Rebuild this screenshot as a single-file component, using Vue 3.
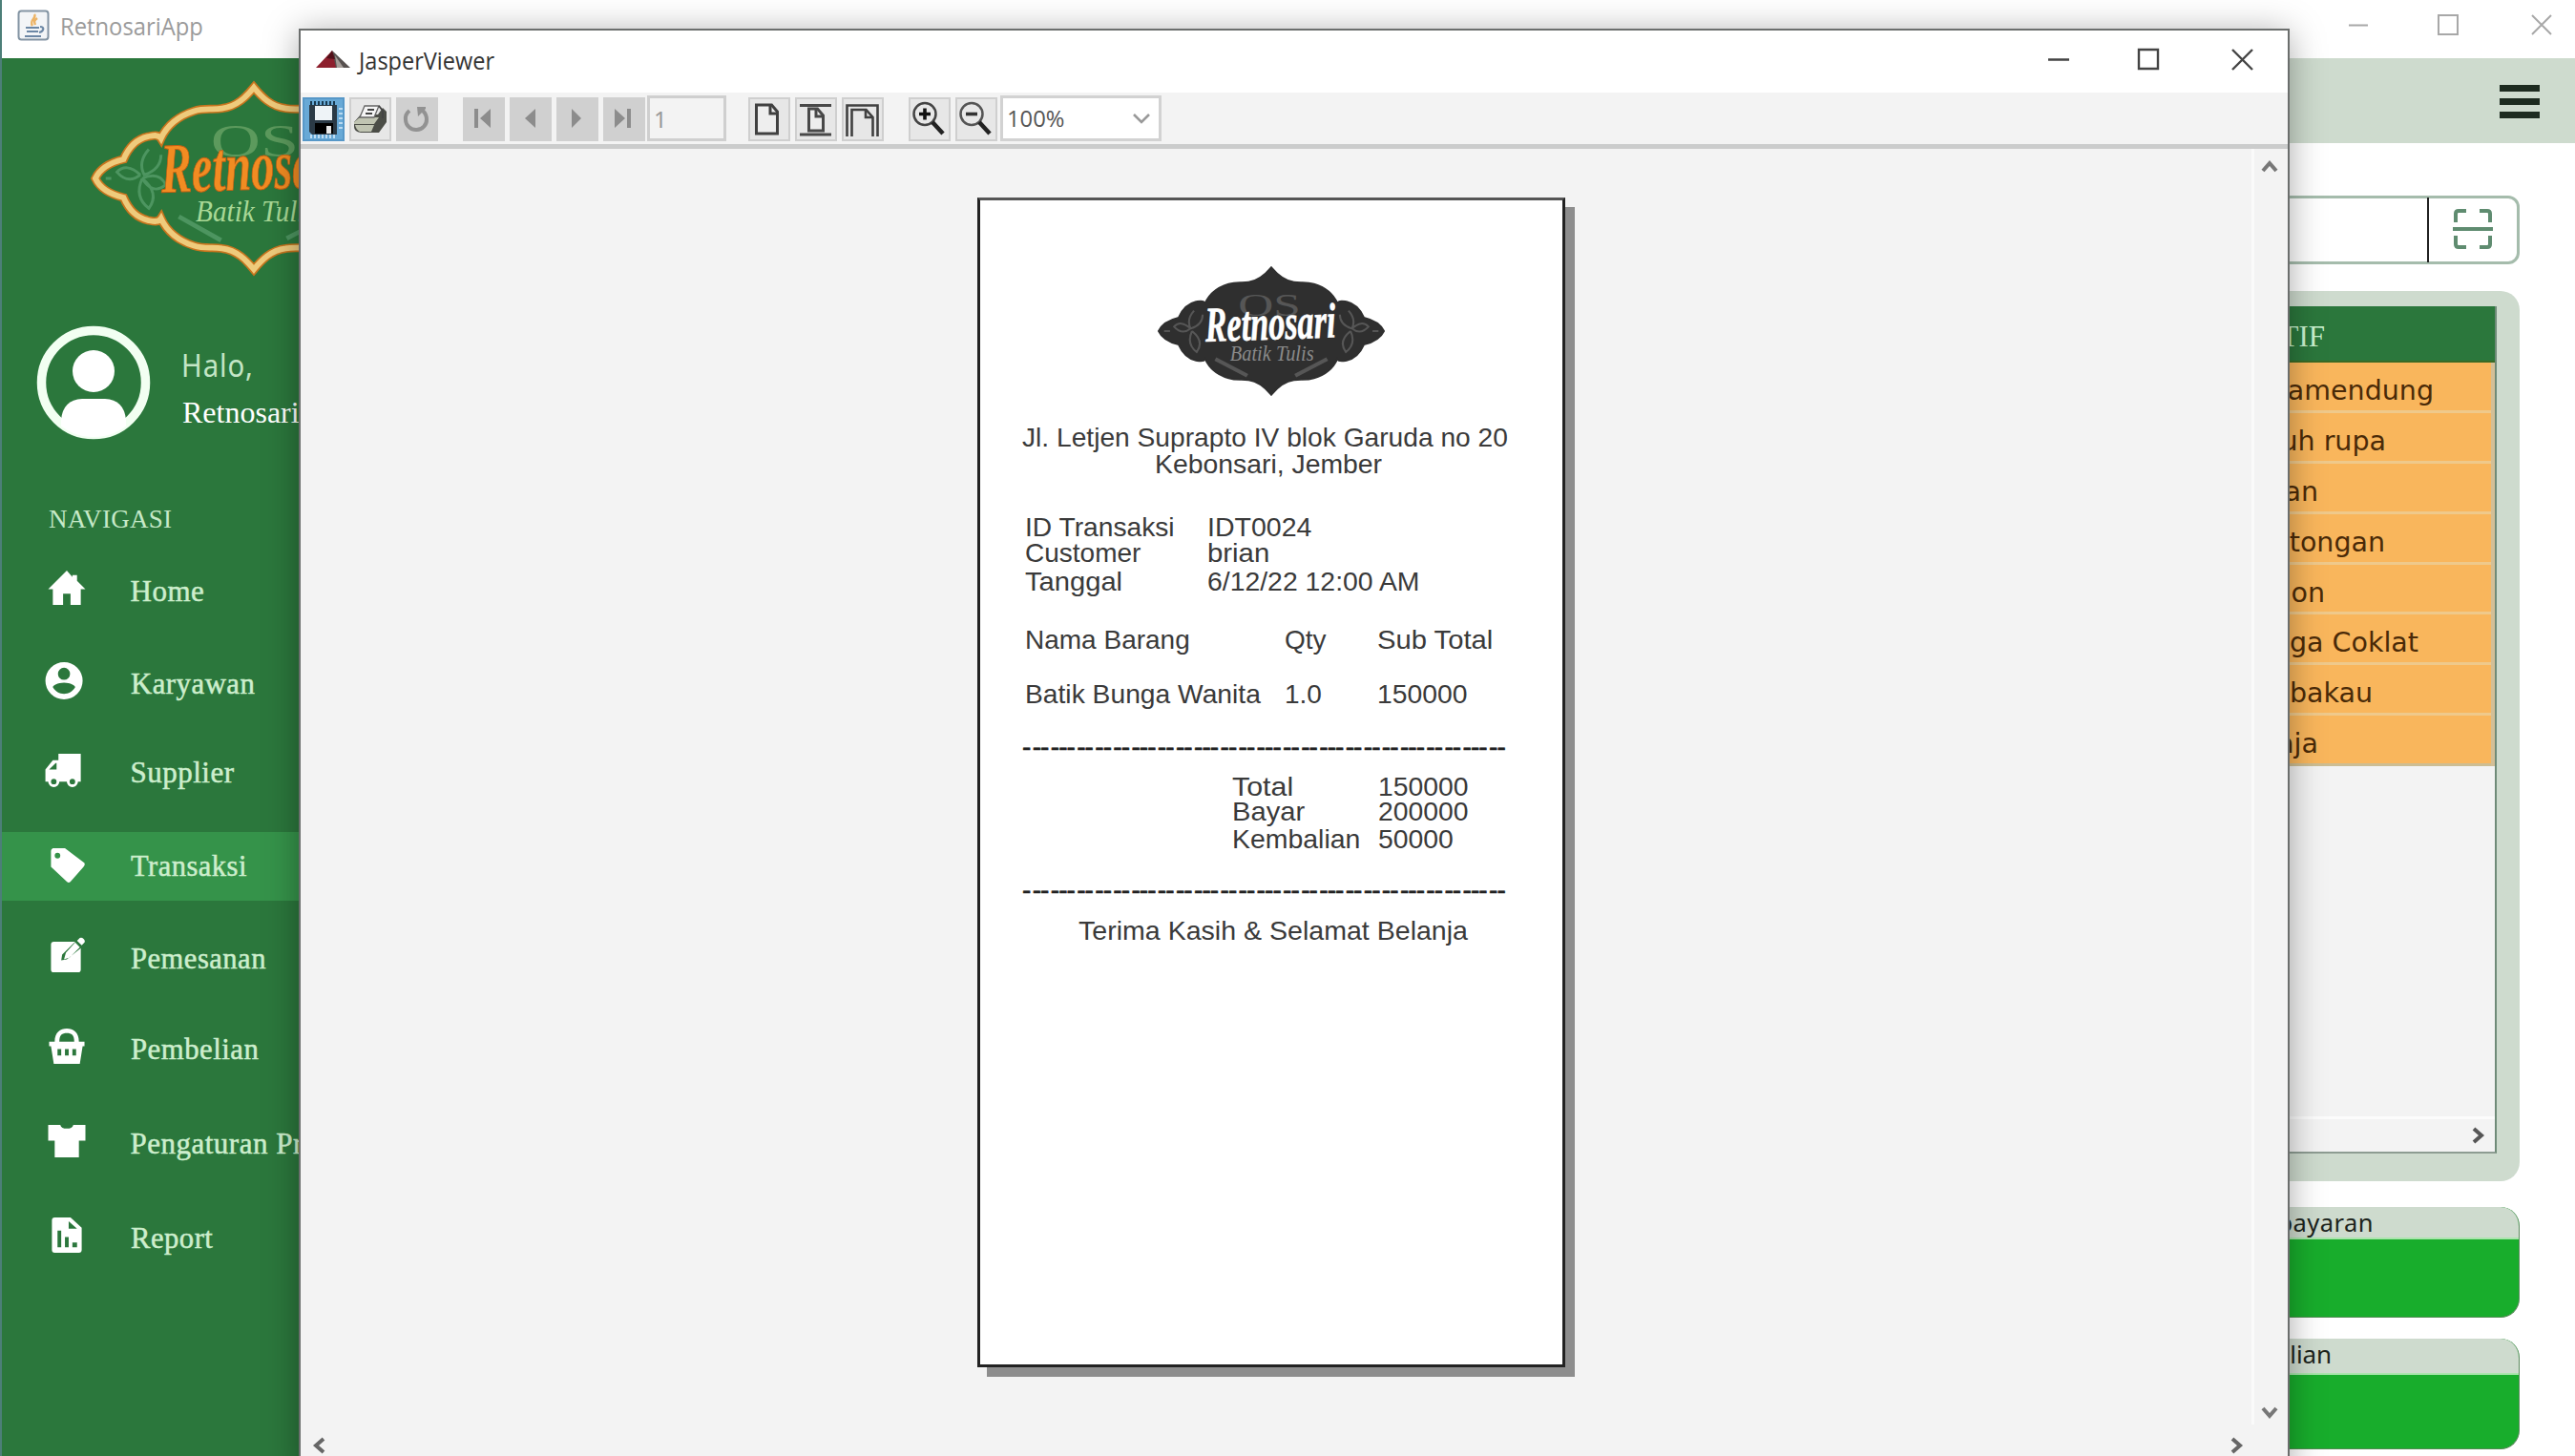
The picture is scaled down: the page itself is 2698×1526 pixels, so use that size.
<script setup>
const emblem =
  'M0-100C-8-90-18-79-34-77C-44-75-52-78-64-74C-80-69-93-58-99-44C-102-49-108-47-113-46C-126-43-134-33-139-21C-155-17-165-9-169 0C-165 9-155 17-139 21C-134 33-126 43-113 46C-108 47-102 49-99 44C-93 58-80 69-64 74C-52 78-44 75-34 77C-18 79-8 90 0 100C8 90 18 79 34 77C44 75 52 78 64 74C80 69 93 58 99 44C102 49 108 47 113 46C126 43 134 33 139 21C155 17 165 9 169 0C165-9 155-17 139-21C134-33 126-43 113-46C108-47 102-49 99-44C93-58 80-69 64-74C52-78 44-75 34-77C18-79 8-90 0-100Z'

const nav = [
  { label: 'Home', gap: 0, w: 78, icon: 'M20 1L0 21h5v17h11V26h8v12h11V21h5L31 12V6h-5v2z' },
  { label: 'Karyawan', gap: 25, w: 130, dx: -3, icon: 'M20 0a20 20 0 1 0 0 40a20 20 0 0 0 0-40zM20 6a6.5 6.5 0 1 1 0 13a6.5 6.5 0 0 1 0-13zM20 22c7 0 12 3 12 5c-3 5-7 7-12 7s-9-2-12-7c0-2 5-5 12-5z' },
  { label: 'Supplier', gap: 21, w: 109, dx: -3, dy: 2, icon: 'M14 1h24v30h-3a6 6 0 1 1-12 0h-8a6 6 0 1 1-12 0H0V18L8 8h6zM11 11L4 18h8v-7zM9 28a3 3 0 1 0 0 6a3 3 0 0 0 0-6zM29 28a3 3 0 1 0 0 6a3 3 0 0 0 0-6z' },
  { label: 'Transaksi', gap: 26, w: 122, dy: 2, active: true, icon: 'M5 2h13l21 16q1 2-1 4L24 38q-2 2-4 0L3 22V5q0-2 2-3zM10 7a3 3 0 1 0 0 6a3 3 0 0 0 0-6z' },
  { label: 'Pemesanan', gap: 25, w: 142, icon: 'M6 5h23L15 19l-1 6l6-1L35 12v23q0 3-3 3H6q-3 0-3-3V8q0-3 3-3zM34 1q2-1 4 1t1 4l-3 3l-5-5zM29 6l5 5L23 22l-6 2l2-7z' },
  { label: 'Pembelian', gap: 23, w: 134, icon: 'M7 15C7 5 13 1 20 1s13 4 13 14h6v5h-2l-3 19H6L3 20H1v-5zM12 15h16C28 8 25 6 20 6s-8 2-8 9zM10 23v7h4v-7zM18 23v7h4v-7zM26 23v7h4v-7z' },
  { label: 'Pengaturan Produk', gap: 27, icon: 'M0 3h13q1 4 7 4t7-4h13v17h-7v18H7V20H0z' },
  { label: 'Report', gap: 27, w: 86, icon: 'M7 1h17l12 11v24q0 3-3 3H7q-3 0-3-3V4q0-3 3-3zM22 5v8h9zM10 15v18h4V15zM18 22v11h4V22zM26 28v5h5v-5z' },
]

const motifs = [
  ['amendung', 65], ['uh rupa', 115], ['an', 186], ['tongan', 116],
  ['on', 179], ['ga Coklat', 81], ['bakau', 129], ['aja', 186],
]

const dashes = [1, 2, 3, 2, 2, 2, 3, 2, 2, 3, 2, 2, 3, 2, 2, 3, 2, 2, 2, 3, 2, 2, 3, 2]

// Squeezes or stretches a label horizontally to the given width.
const vFit = {
  mounted(el, { value }) {
    if (value) el.style.transform = `scaleX(${value / el.offsetWidth})`
  },
}
</script>

<template>
  <div class="desktop">
    <header class="titlebar">
      <svg class="java" viewBox="0 0 34 33">
        <rect x="1.5" y="1.5" width="31" height="30" rx="3" fill="#f3f5f7" stroke="#8394a3" stroke-width="2" />
        <path d="M18 5c3 4-6 6-2 12M21 9c-4 3-3 4-2 7" fill="none" stroke="#edb466" stroke-width="2.4" />
        <path d="M9 19h14M10 23h12M8 28h17M24 18c5 0 4 5-1 6" fill="none" stroke="#6c87a5" stroke-width="2.2" />
      </svg>
      <span v-fit="150" class="fit apptitle">RetnosariApp</span>
      <svg class="controls" viewBox="0 0 216 24" fill="none" stroke="#a8a8a8" stroke-width="2">
        <path d="M1 12.500h20M95 2h20v20H95zM193 2l20 20M213 2l-20 20" />
      </svg>
    </header>

    <div class="body">
      <aside class="sidebar">
        <svg class="brand" viewBox="-173 -107 346 214" preserveAspectRatio="none">
          <path :d="emblem" fill="none" stroke="#c8751e" stroke-width="9.500" />
          <path :d="emblem" fill="none" stroke="#efcb7c" stroke-width="6" />
          <text x="-46" y="-24" textLength="94" lengthAdjust="spacingAndGlyphs" class="os" fill="#5c9a5d">OS</text>
          <g fill="none" stroke="#4d9560" stroke-width="3">
            <path d="M-112-32q-12 14-5 28q18-6 18-22M-121-4q-15-14-25-3q12 14 25 3M-119 0q-9 20 7 33q12-17-7-33M-119 0q18-8 25 7q-14 12-25-7M-152 0h-6" />
            <path d="M-80 42l45 26M80 42L35 66" stroke-width="5" />
          </g>
          <text x="-99" y="12" textLength="198" lengthAdjust="spacingAndGlyphs" class="script" fill="#f28c22" stroke="#c65f12" transform="rotate(-2)">Retnosari</text>
          <text x="-62" y="47" textLength="128" lengthAdjust="spacingAndGlyphs" class="sub" fill="#a8d896">Batik Tulis</text>
        </svg>

        <div class="profile">
          <svg class="avatar" viewBox="0 0 120 122">
            <clipPath id="face"><circle cx="60" cy="61" r="57" /></clipPath>
            <circle cx="60" cy="61" r="54.500" fill="none" stroke="#f2fff2" stroke-width="9.500" />
            <ellipse cx="60" cy="49" rx="22" ry="22" fill="#fff" />
            <path d="M26 122V100q2-21 22-22h24q20 1 22 22v22z" fill="#fff" clip-path="url(#face)" />
          </svg>
          <div class="greet">
            <span v-fit="76" class="fit halo">Halo,</span>
            <span class="user">Retnosari</span>
          </div>
        </div>

        <div class="navhead">NAVIGASI</div>
        <nav>
          <a v-for="n in nav" :key="n.label" class="item" :class="{ active: n.active }" :style="{ marginTop: n.gap + 'px' }">
            <svg class="ico" viewBox="0 0 40 40"><path :d="n.icon" fill="#fff" fill-rule="evenodd" :transform="`translate(${n.dx || 0} ${n.dy || 0})`" /></svg>
            <span v-fit="n.w" class="fit">{{ n.label }}</span>
          </a>
        </nav>
      </aside>

      <main class="content">
        <div class="topbar"><div class="burger"><i /><i /><i /></div></div>
        <div class="search">
          <div class="scan">
            <svg viewBox="0 0 42 44" fill="none" stroke="#5f8c70" stroke-width="4">
              <path d="M14 3H6q-3 0-3 3v9M28 3h8q3 0 3 3v9M14 41H6q-3 0-3-3v-9M28 41h8q3 0 3-3v-9M0 22h42" />
            </svg>
          </div>
        </div>
        <section class="panel">
          <div class="table">
            <div class="thead">MOTIF</div>
            <div class="rows">
              <div v-for="m in motifs" :key="m[0]" class="row" :style="{ paddingRight: m[1] - 5 + 'px' }">{{ m[0] }}</div>
            </div>
            <div class="void" />
            <div class="hscroll">
              <svg width="14" height="18" viewBox="0 0 14 18" fill="none" stroke="#555" stroke-width="4"><path d="M2 2l8 7l-8 7" /></svg>
            </div>
          </div>
        </section>
        <section class="card c1"><h4>Pembayaran</h4></section>
        <section class="card c2"><h4>Kembalian</h4></section>
      </main>
    </div>

    <div class="dialog">
      <div class="dtitle">
        <svg class="jasper" viewBox="0 0 36 20">
          <path d="M0 18L17 0l6 18z" fill="#8d1f2d" /><path d="M17 0l19 18H21z" fill="#57514f" /><path d="M20 5l9 13h-7z" fill="#a59d98" /><path d="M11 8l6-8l3 9z" fill="#511019" />
        </svg>
        <span v-fit="142" class="fit dname">JasperViewer</span>
        <svg class="controls dark" viewBox="0 0 216 24" fill="none" stroke="#444" stroke-width="2.400">
          <path d="M1 12.500h22M96 2h20v20H96zM194 2l21 21M215 2l-21 21" />
        </svg>
      </div>

      <div class="toolbar">
        <button class="tb save">
          <svg viewBox="0 0 44 46">
            <path d="M7 8h29v31H10l-3-3z" fill="#2b3a46" /><path d="M13 9h18v15H13z" fill="#eef3f7" />
            <path d="M9 4v4M13 4v4M17 4v4M21 4v4M25 4v4M29 4v4M33 4v4" stroke="#17384f" stroke-width="2" />
            <path d="M9 39v4M13 39v4M17 39v4M21 39v4M25 39v4M29 39v4M33 39v4M38 12h4M38 17h4M38 22h4M38 27h4M38 32h4" stroke="#d6ecfa" stroke-width="1.600" />
            <path d="M13 27h19v11H13z" fill="#000" /><path d="M25 30h5v8h-5z" fill="#e8e8e8" />
          </svg>
        </button>
        <button class="tb print">
          <svg viewBox="0 0 44 46">
            <path d="M5 26l7-8h18l5-7l4 4v11l-8 11H12q-7-1-7-6z" fill="#4b4d47" />
            <path d="M5 26l6-5h20l-5 7H5zM6 29h20l-3 7H11q-4-2-5-7z" fill="#c0c4b2" />
            <path d="M11 21l5-12h15l-5 12z" fill="#f5f5f5" stroke="#666" stroke-width="1.300" />
            <path d="M19 13h7M17 17h7M31 9l4 5v8" stroke="#444" stroke-width="2" fill="none" />
          </svg>
        </button>
        <button class="tb off reload">
          <svg viewBox="0 0 44 46"><path d="M14 14q-5 4-4 10a11 10.500 0 0 0 22-1q0-5-4-9" fill="none" stroke="#929292" stroke-width="4" /><path d="M22 10h9v2l-8 8z" fill="#929292" /></svg>
        </button>
        <button class="tb off first"><svg viewBox="0 0 44 46"><path d="M12 12h4v20h-4zM29 12v20l-11-10z" fill="#8c8c8c" /></svg></button>
        <button class="tb off"><svg viewBox="0 0 44 46"><path d="M27 12v20L16 22z" fill="#8c8c8c" /></svg></button>
        <button class="tb off"><svg viewBox="0 0 44 46"><path d="M16 12v20l10-10z" fill="#8c8c8c" /></svg></button>
        <button class="tb off"><svg viewBox="0 0 44 46"><path d="M12 12v20l11-10zM25 12h4v20h-4z" fill="#8c8c8c" /></svg></button>
        <div class="pageno">1</div>
        <button class="tb p1"><svg viewBox="0 0 44 46" fill="none" stroke="#404040" stroke-width="3"><path d="M8.500 8h16l6 7v23h-22z" fill="#eee" /><path d="M23 8v9h8" /></svg></button>
        <button class="tb"><svg viewBox="0 0 44 46" fill="none" stroke="#484848" stroke-width="3"><path d="M5 8.500h33M5 39h33" /><path d="M14.500 12h9l6 7v16h-15z" fill="#eee" /><path d="M22 11v9h8" /></svg></button>
        <button class="tb"><svg viewBox="0 0 44 46" fill="none" stroke="#404040" stroke-width="2.600"><path d="M5.500 41V8.500h32V41M10.500 41V13h15l7 8v20" /><path d="M25 13v8h8" /></svg></button>
        <button class="tb z1"><svg viewBox="0 0 44 46"><circle cx="17" cy="17.500" r="11.500" fill="#e8e8e8" stroke="#444" stroke-width="2.500" /><path d="M11 17.500h12M17 11.500v12" stroke="#111" stroke-width="3.600" /><path d="M25 26l11 12" stroke="#222" stroke-width="4.500" /></svg></button>
        <button class="tb z2"><svg viewBox="0 0 44 46"><circle cx="17" cy="17.500" r="11.500" fill="#e8e8e8" stroke="#555" stroke-width="2.500" /><path d="M11 17.500h12" stroke="#333" stroke-width="3.600" /><path d="M25 26l11 12" stroke="#222" stroke-width="4.500" /></svg></button>
        <div class="combo">
          <span v-fit="60" class="fit">100%</span>
          <svg width="18" height="12" viewBox="0 0 18 12" fill="none" stroke="#999" stroke-width="2.600"><path d="M1 2l8 8l8-8" /></svg>
        </div>
      </div>

      <div class="view">
        <div class="canvas">
          <article class="paper">
            <svg class="stamp" viewBox="-172 -102 344 204" preserveAspectRatio="none">
              <path :d="emblem" fill="#2f2f2f" stroke="#2f2f2f" stroke-width="3" />
              <text x="-50" y="-24" textLength="94" lengthAdjust="spacingAndGlyphs" class="os" fill="#565656">OS</text>
              <g fill="none" stroke="#565656" stroke-width="3">
                <path d="M-116-32q-12 14-5 28q18-6 18-22M-121-4q-15-14-25-3q12 14 25 3M-119 0q-9 20 7 33q12-17-7-33M-152 0h-9M116-32q12 14 5 28q-18-6-18-22M121-4q15-14 25-3q-12 14-25 3M119 0q9 20-7 33q-12-17 7-33M152 0h9" />
                <path d="M-84 44l48 26M84 44L36 70" stroke-width="6" />
              </g>
              <text x="-99" y="13" textLength="196" lengthAdjust="spacingAndGlyphs" class="script" fill="#fff" stroke="#fff" transform="rotate(-2)">Retnosari</text>
              <text x="-62" y="47" textLength="126" lengthAdjust="spacingAndGlyphs" class="sub" fill="#8a8a8a">Batik Tulis</text>
            </svg>
            <div class="ln addr"><span v-fit="509" class="fit">Jl. Letjen Suprapto IV blok Garuda no 20</span></div>
            <div class="ln addr2"><span v-fit="238" class="fit">Kebonsari, Jember</span></div>

            <div class="ln meta m1"><span v-fit="157" class="fit">ID Transaksi</span><span v-fit="109" class="fit">IDT0024</span></div>
            <div class="ln meta m2"><span v-fit="121" class="fit">Customer</span><span v-fit="65" class="fit">brian</span></div>
            <div class="ln meta m3"><span v-fit="102" class="fit">Tanggal</span><span v-fit="223" class="fit">6/12/22 12:00 AM</span></div>

            <div class="ln cols h"><span v-fit="173" class="fit">Nama Barang</span><span v-fit="44" class="fit">Qty</span><span v-fit="121" class="fit">Sub Total</span></div>
            <div class="ln cols b"><span v-fit="247" class="fit">Batik Bunga Wanita</span><span v-fit="39" class="fit">1.0</span><span v-fit="94" class="fit">150000</span></div>

            <div class="dash d1"><span v-for="(d, i) in dashes" :key="i">{{ '-'.repeat(d) }}</span></div>

            <div class="ln sum s1"><span v-fit="64" class="fit">Total</span><span v-fit="94" class="fit">150000</span></div>
            <div class="ln sum s2"><span v-fit="76" class="fit">Bayar</span><span v-fit="94" class="fit">200000</span></div>
            <div class="ln sum s3"><span v-fit="134" class="fit">Kembalian</span><span v-fit="79" class="fit">50000</span></div>

            <div class="dash d2"><span v-for="(d, i) in dashes" :key="i">{{ '-'.repeat(d) }}</span></div>
            <div class="ln thanks"><span v-fit="408" class="fit">Terima Kasih &amp; Selamat Belanja</span></div>
          </article>
        </div>
        <div class="vbar">
          <svg width="18" height="14" viewBox="0 0 18 14" fill="none" stroke="#777" stroke-width="4"><path d="M2 12l7-8l7 8" /></svg>
          <svg width="18" height="14" viewBox="0 0 18 14" fill="none" stroke="#777" stroke-width="4"><path d="M2 2l7 8l7-8" /></svg>
        </div>
        <div class="hbar">
          <svg width="14" height="18" viewBox="0 0 14 18" fill="none" stroke="#666" stroke-width="4"><path d="M12 2L4 9l8 7" /></svg>
          <svg width="14" height="18" viewBox="0 0 14 18" fill="none" stroke="#666" stroke-width="4"><path d="M2 2l8 7l-8 7" /></svg>
        </div>
      </div>
    </div>
  </div>
</template>

<style>
body { margin: 0; overflow: hidden; background: #fff; }
</style>

<style scoped>
* { box-sizing: border-box; }
.desktop { position: relative; width: 2698px; height: 1526px; overflow: hidden; display: flex; flex-direction: column; background: #fff; border-left: 2px solid #4c7f78; }
.fit { display: inline-block; transform-origin: 0 50%; white-space: nowrap; }
svg { display: block; flex: none; }
.titlebar { height: 61px; flex: none; display: flex; align-items: flex-start; padding: 0 0 0 16px; }
.java { width: 34px; height: 33px; margin-top: 10px; }
.apptitle { font: 26px/36px "Open Sans", sans-serif; color: #9b9b9b; margin: 9px 0 0 11px; }
.controls { width: 216px; height: 24px; margin: 14px 22px 0 auto; }
.body { flex: 1; display: flex; min-height: 0; }
.sidebar { width: 312px; flex: none; background: #2b773c; overflow: hidden; font-family: "Liberation Serif", serif; display: flex; flex-direction: column; }
.brand { width: 340px; height: 204px; margin: 24px 0 0 94px; overflow: visible; }
.os { font: 52px "Liberation Serif", serif; }
.script { font: italic bold 78px "Liberation Serif", serif; stroke-width: 1; }
.sub { font: italic 34px "Liberation Serif", serif; }
.profile { display: flex; margin: 51px 0 0 36px; height: 122px; }
.avatar { width: 120px; height: 122px; }
.greet { display: flex; flex-direction: column; align-items: flex-start; margin-left: 32px; white-space: nowrap; }
.halo { font: 32px/40px "Noto Sans", sans-serif; color: #c3e6c6; margin: 23px 0 0; letter-spacing: 1px; }
.user { font-size: 32px; line-height: 40px; color: #fff; margin-top: 9px; margin-left: 1px; }
.navhead { font-size: 27px; line-height: 30px; color: #c6e9c8; margin: 67px 0 0 49px; letter-spacing: .3px; }
nav { margin-top: 25px; }
.item { display: flex; align-items: center; height: 72px; padding-left: 48px; font-size: 31px; line-height: 40px; letter-spacing: .5px; color: #cdeecd; white-space: nowrap; -webkit-text-stroke: .5px #cdeecd; }
.item.active { background: #35934a; }
.ico { width: 40px; height: 39px; margin: 0 46.5px 8px 0; overflow: visible; }
.content { flex: 1; min-width: 0; display: flex; flex-direction: column; }
.topbar { height: 89px; flex: none; background: #cedbce; display: flex; justify-content: flex-end; padding: 28px 37px 0 0; }
.burger { display: flex; flex-direction: column; gap: 7px; width: 42px; }
.burger i { height: 7px; background: #1d2b20; }
.search { height: 72px; flex: none; margin: 55px 58px 0 1900px; border: 3px solid #a5bcac; border-radius: 12px; display: flex; justify-content: flex-end; }
.scan { width: 94px; margin: -1px 0; border-left: 2px solid #222; padding: 11px 0 0 25px; }
.scan svg { width: 42px; height: 44px; }
.panel { height: 933px; flex: none; margin: 28px 58px 0 1900px; background: #cedbce; border-radius: 20px; padding: 16px 24px 29px 0; }
.table { height: 888px; border-right: 2px solid #6f8b78; border-bottom: 2px solid #8d9c92; display: flex; flex-direction: column; background: #f3f3f3; }
.thead { height: 59px; flex: none; background: #2b773c; color: #c9f0cd; font: 31px/63px "Liberation Serif", serif; text-align: right; padding-right: 178px; border-bottom: 2px solid #3a6a25; }
.rows { border-right: 4px solid #d3bf97; }
.row { height: 52.9px; background: #f9b65c; border-bottom: 3px solid #efc98b; text-align: right; font: 28.5px/60px "DejaVu Sans", sans-serif; color: #4a2a08; white-space: nowrap; }
.row:last-child { border-bottom-color: #cdbd92; }
.void { flex: 1; border-bottom: 3px solid #fcfcfc; }
.hscroll { height: 34px; display: flex; justify-content: flex-end; align-items: center; padding-right: 10px; }
.card { height: 116px; flex: none; margin: 27px 58px 0 1900px; border-radius: 20px; overflow: hidden; background: #18ad2c; border-right: 1px solid #5d8a60; border-bottom: 1px solid #4f8a50; }
.card.c2 { margin-top: 22px; }
.card h4 { margin: 0; height: 34px; background: #cedbce; border-bottom: 2px solid #a9e5ac; text-align: right; padding-right: 152px; font: 26px/33px "Noto Sans", sans-serif; letter-spacing: -.1px; color: #1c241c; }
.card.c1 h4 { font-size: 25.5px; letter-spacing: .45px; }
.card.c2 h4 { height: 38px; padding-right: 196px; }

.dialog { position: absolute; left: 311px; top: 30px; width: 2086px; height: 1520px; background: #f3f3f3; border: 2px solid #6b6e6d; box-shadow: 0 4px 34px rgba(0, 0, 0, .34); display: flex; flex-direction: column; }
.dtitle { height: 65px; flex: none; background: #fff; display: flex; align-items: flex-start; padding-left: 16px; }
.jasper { width: 36px; height: 20px; margin-top: 21px; }
.dname { font: 26px/36px "Open Sans", sans-serif; color: #333; margin: 13px 0 0 9px; }
.controls.dark { margin: 18px 36px 0 auto; }
.toolbar { height: 59px; flex: none; border-bottom: 5px solid #cbcccc; display: flex; align-items: flex-start; padding: 5px 0 0 2px; gap: 5px; }
.tb { width: 44px; height: 46px; padding: 0; border: 2px solid #cfcfcf; background: #e7e7e7; flex: none; }
.tb svg { width: 44px; height: 46px; margin: -2px; }
.tb.off { background: #d0d0d0; border-color: #d0d0d0; }
.tb.save { background: #68a9d6; border-color: #5798c8; }
.first { margin-left: 21px; }
.pageno { width: 83px; height: 48px; margin: -2px 0 0 -3px; border: 3px solid #cfcfcf; font: 24px/44px "Noto Sans", sans-serif; color: #999; padding-left: 4px; background: #f3f3f3; }
.p1 { margin-left: 18px; }
.z1 { margin-left: 21px; }
.combo { width: 169px; height: 48px; margin: -2px 0 0 -2px; border: 3px solid #d2d2d2; background: #fff; display: flex; align-items: center; justify-content: space-between; padding: 0 9px 0 4px; font: 23px/40px "Open Sans", sans-serif; color: #555; }
.view { flex: 1; min-height: 0; display: grid; grid-template-columns: 1fr 38px; grid-template-rows: 1337px 1fr; }
.canvas { padding: 51px 0 0 709px; }
.vbar { border-left: 3px solid #fafafa; display: flex; flex-direction: column; justify-content: space-between; align-items: center; padding: 11px 3px 5px 0; }
.hbar { grid-column: 1; display: flex; justify-content: space-between; align-items: flex-start; padding: 13px 8px 0 12px; }
.paper { width: 616px; height: 1226px; background: #fff; border: 3px solid #222; border-top-color: #555; box-shadow: 10px 10px 0 #8d8d8d; display: flex; flex-direction: column; font: 28px/28px "Liberation Sans", sans-serif; color: #3a3a3a; }
.stamp { width: 240px; height: 136px; margin: 69px 0 0 185px; }
.ln { height: 28px; white-space: nowrap; }
.addr { margin: 30px 0 0 44px; }
.addr2 { margin: 0 0 0 183px; }
.meta { display: grid; grid-template-columns: 191px 1fr; margin-left: 47px; justify-items: start; }
.m1 { margin-top: 38px; }
.m2 { margin-top: -1px; }
.m3 { margin-top: 2px; }
.cols { display: grid; grid-template-columns: 272px 97px 1fr; margin-left: 47px; justify-items: start; }
.h { margin-top: 33px; }
.b { margin-top: 29px; }
.dash { height: 28px; display: flex; justify-content: space-between; width: 506px; margin-left: 44px; letter-spacing: -.9px; color: #222; -webkit-text-stroke: .6px #222; }
.d1 { margin-top: 27px; }
.d2 { margin-top: 25px; }
.sum { display: grid; grid-template-columns: 153px 1fr; margin-left: 264px; justify-items: start; }
.s1 { margin-top: 14px; }
.s2 { margin-top: -2px; }
.s3 { margin-top: 1px; }
.thanks { margin: 15px 0 0 103px; }
</style>
